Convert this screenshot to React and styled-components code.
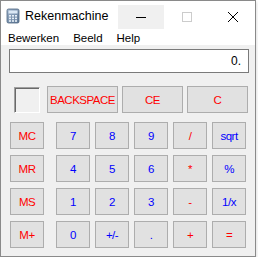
import React from "react";
import styled, { createGlobalStyle } from "styled-components";

const GlobalStyle = createGlobalStyle`
  html, body {
    margin: 0;
    padding: 0;
    background: #ffffff;
  }
  body {
    font-family: "Liberation Sans", Arial, sans-serif;
  }
`;

const Window = styled.div`
  box-sizing: border-box;
  width: 256px;
  height: 257px;
  border: 1px solid #8a8a8a;
  background: #f0f0f0;
  display: flex;
  flex-direction: column;
  box-shadow: 1px 2px 3px rgba(0, 0, 0, 0.12);
`;

const TitleBar = styled.div`
  height: 29px;
  background: #ffffff;
  display: flex;
  align-items: center;
`;

const AppIcon = styled.svg`
  margin-left: 4px;
  width: 16px;
  height: 16px;
`;

const TitleText = styled.span`
  margin-left: 4px;
  font-size: 12.5px;
  color: #000;
  flex: 1;
`;

const TitleButton = styled.div`
  width: ${(p) => p.$w}px;
  height: 24px;
  margin-top: 2px;
  display: flex;
  align-items: center;
  justify-content: center;
  background: ${(p) => (p.$hover ? "#f0f0f0" : "transparent")};
`;

const MenuBar = styled.div`
  height: 15px;
  background: #ffffff;
  display: flex;
  align-items: center;
`;

const MenuItem = styled.span`
  padding: 0 7px;
  font-size: 11.5px;
  color: #000;
`;

const Content = styled.div`
  flex: 1;
  padding-top: 4px;
`;

const Display = styled.div`
  box-sizing: border-box;
  margin-left: 8px;
  width: 240px;
  height: 24px;
  border: 1px solid #7a7a7a;
  background: #ffffff;
  display: flex;
  align-items: center;
  justify-content: flex-end;
  padding-right: 7px;
  font-size: 12px;
  color: #000;
`;

const Keypad = styled.div`
  padding-left: 9px;
  display: flex;
  flex-direction: column;
`;

const TopRow = styled.div`
  margin-top: 13px;
  display: flex;
  align-items: flex-start;
`;

const MemoryBox = styled.div`
  box-sizing: border-box;
  width: 26px;
  height: 26px;
  margin: 1px 7px 0 4px;
  border-top: 1px solid #a0a0a0;
  border-left: 1px solid #a0a0a0;
  border-right: 1px solid #ffffff;
  border-bottom: 1px solid #ffffff;
  box-shadow: inset 1px 1px 0 #696969;
  background: #f0f0f0;
`;

const Grid = styled.div`
  margin-top: 9px;
  display: flex;
  flex-direction: column;
  gap: 6px;
`;

const Row = styled.div`
  display: flex;
  gap: 5px;
`;

const Key = styled.button`
  box-sizing: border-box;
  width: ${(p) => p.$w || 34}px;
  height: 27px;
  margin: 0;
  margin-right: ${(p) => p.$mr || 0}px;
  padding: 0;
  border: 1px solid #adadad;
  background: #e1e1e1;
  font-family: "Liberation Sans", Arial, sans-serif;
  font-size: 11.5px;
  letter-spacing: -0.5px;
  color: ${(p) => (p.$red ? "#ff0000" : "#0000ff")};
  display: flex;
  align-items: center;
  justify-content: center;
`;

const rows = [
  [["MC", 1], ["7"], ["8"], ["9"], ["/", 1], ["sqrt"]],
  [["MR", 1], ["4"], ["5"], ["6"], ["*", 1], ["%"]],
  [["MS", 1], ["1"], ["2"], ["3"], ["-", 1], ["1/x"]],
  [["M+", 1], ["0"], ["+/-"], ["."], ["+", 1], ["=", 1]],
];

const CalcIcon = () => (
  <AppIcon viewBox="0 0 16 16">
    <defs>
      <linearGradient id="cg" x1="0" y1="0" x2="1" y2="1">
        <stop offset="0" stopColor="#9fb4cc" />
        <stop offset="1" stopColor="#5f7896" />
      </linearGradient>
    </defs>
    <rect x="2" y="1" width="12" height="14" rx="1.5" fill="url(#cg)" stroke="#4d6580" strokeWidth="0.8" />
    <rect x="3.5" y="2.5" width="9" height="3" fill="#dbe8f5" />
    {[0, 1, 2].map((r) =>
      [0, 1, 2].map((c) => (
        <rect key={`${r}${c}`} x={4 + c * 3} y={7 + r * 2.6} width="2" height="1.6" fill="#e8f0f8" />
      ))
    )}
  </AppIcon>
);

export default function App() {
  return (
    <>
      <GlobalStyle />
      <Window>
        <TitleBar>
          <CalcIcon />
          <TitleText>Rekenmachine</TitleText>
          <TitleButton $w={46} $hover>
            <svg width="12" height="10" viewBox="0 0 12 10">
              <line x1="1" y1="5.5" x2="11" y2="5.5" stroke="#000" strokeWidth="1" />
            </svg>
          </TitleButton>
          <TitleButton $w={46}>
            <svg width="12" height="12" viewBox="0 0 12 12">
              <rect x="1.5" y="1.5" width="9" height="9" fill="none" stroke="#cccccc" strokeWidth="1" />
            </svg>
          </TitleButton>
          <TitleButton $w={45}>
            <svg width="12" height="12" viewBox="0 0 12 12">
              <path d="M1 1 L11 11 M11 1 L1 11" stroke="#000" strokeWidth="1" />
            </svg>
          </TitleButton>
        </TitleBar>
        <MenuBar>
          <MenuItem>Bewerken</MenuItem>
          <MenuItem>Beeld</MenuItem>
          <MenuItem>Help</MenuItem>
        </MenuBar>
        <Content>
          <Display>0.</Display>
          <Keypad>
            <TopRow>
              <MemoryBox />
              <Key $w={71} $mr={4} $red>BACKSPACE</Key>
              <Key $w={61} $mr={4} $red>CE</Key>
              <Key $w={61} $red>C</Key>
            </TopRow>
            <Grid>
              {rows.map((row, i) => (
                <Row key={i}>
                  {row.map(([label, red], j) => (
                    <Key key={label} $red={!!red} $mr={j === 0 ? 7 : 0}>
                      {label}
                    </Key>
                  ))}
                </Row>
              ))}
            </Grid>
          </Keypad>
        </Content>
      </Window>
    </>
  );
}
